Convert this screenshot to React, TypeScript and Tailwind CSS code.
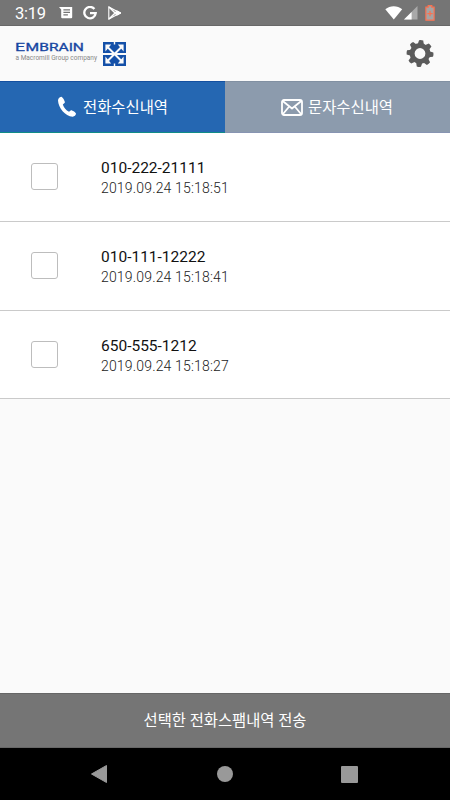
import { useState } from "react";

interface Call {
  number: string;
  date: string;
}

const calls: Call[] = [
  { number: "010-222-21111", date: "2019.09.24 15:18:51" },
  { number: "010-111-12222", date: "2019.09.24 15:18:41" },
  { number: "650-555-1212", date: "2019.09.24 15:18:27" },
];

function StatusBar() {
  return (
    <div className="flex h-[26px] shrink-0 items-center border-b border-[#686868] bg-[#757575] pl-[15px] pr-[15px] text-white">
      <span className="w-[44px] pt-[3px] text-[16.5px] leading-none tracking-[-0.3px]">3:19</span>
      <svg width="14" height="14" viewBox="0 0 14 14" fill="currentColor">
        <path d="M0 1h13.2v10.2a1 1 0 0 1-1 1H3.2a1 1 0 0 1-1-1V3.4z" />
        <path d="M4.4 3.9h6.6M4.4 6.4h6.6M4.4 8.9h4.5" stroke="#757575" strokeWidth="1.1" />
      </svg>
      <svg className="ml-[10px]" width="14" height="14" viewBox="0 0 14 14" fill="none" stroke="currentColor" strokeWidth="2.3">
        <path d="M11.4 3A5.7 5.7 0 1 0 12.7 7.2H7" />
      </svg>
      <svg className="ml-[11px]" width="13" height="14" viewBox="0 0 13 14" fill="none" stroke="currentColor">
        <path d="M.8 1v12L12.2 7z" strokeWidth="1.1" />
        <path d="M1 1l8 7.8L12.5 7 9 5.2 1 13" strokeWidth="1.5" />
        <path d="M8.7 5.2L12.5 7 8.7 8.8 7 7z" fill="currentColor" />
      </svg>
      <svg className="ml-auto" width="18" height="14" viewBox="0 0 18 14" fill="currentColor">
        <path d="M.3 3.2C5.2-.7 12.3-.7 17.2 3.2L8.8 13.4z" />
      </svg>
      <svg className="ml-px" width="14" height="14" viewBox="0 0 14 14" fill="currentColor">
        <path d="M0 13.5L13.5 0v13.5z" opacity=".38" />
        <path d="M0 13.5L7.6 5.9v7.6z" />
      </svg>
      <svg className="ml-[7px]" width="10" height="16" viewBox="0 0 10 16">
        <path d="M3.2.7h3.6v1.5h2.3v13H.9v-13h2.3z" fill="#a4a4a4" stroke="#fb7150" strokeWidth="1.2" />
        <path d="M5 6v5.2M2.4 8.6h5.2" stroke="#fb7150" strokeWidth="1.2" />
      </svg>
    </div>
  );
}

function Logo() {
  return (
    <div className="flex items-center gap-[5px] font-['Roboto',sans-serif]">
      <svg width="83" height="24" viewBox="0 0 83 24" className="overflow-visible">
        <g fill="#1746a2" stroke="#1746a2" strokeWidth=".3">
          <text x="0" y="9.3" fontSize="11.6" textLength="10" lengthAdjust="spacingAndGlyphs">E</text>
          <text x="10.6" y="9.3" fontSize="10.6" textLength="58.4" lengthAdjust="spacingAndGlyphs">MBRAIN</text>
        </g>
        <text x="0.5" y="17.7" fontSize="7" fill="#888" textLength="81.5" lengthAdjust="spacingAndGlyphs">
          a Macromill Group company
        </text>
      </svg>
      <svg width="23" height="24" viewBox="0 0 23 24">
        <path d="M0 0h23v24H0z" fill="#1450a8" />
        <g fill="#fafafa">
          <path d="M2.4 2.6h5.8L2.4 9.4zM20.6 2.6v6.8L14.8 2.6zM2.4 21.4v-6.8l5.8 6.8zM20.6 21.4h-5.8l5.8-6.8z" />
          <path d="M10.8 0h1.4v2.4h-1.4zM10.8 21.6h1.4V24h-1.4zM0 11.1h23v1.8H0z" />
        </g>
        <path d="M4 4.5l15 15M19 4.5l-15 15" stroke="#fafafa" strokeWidth="2" />
      </svg>
    </div>
  );
}

function Header() {
  return (
    <header className="flex h-[55px] shrink-0 items-center justify-between bg-[#fafafa] pr-4 pl-[15px]">
      <Logo />
      <svg width="28" height="28" viewBox="0 0 28 28" fill="none">
        <circle cx="14" cy="13.5" r="7.9" stroke="#5b5b5b" strokeWidth="5" />
        <g fill="#5b5b5b" transform="rotate(5 14 13.5)">
          <path id="tooth" d="M10.9 4.5l1-4.2q2.1-.6 4.2 0l1 4.2z" />
          {[45, 90, 135, 180, 225, 270, 315].map((deg) => (
            <use key={deg} href="#tooth" transform={`rotate(${deg} 14 13.5)`} />
          ))}
        </g>
      </svg>
    </header>
  );
}

function CallRow({ number, date }: Call) {
  const [checked, setChecked] = useState(false);

  return (
    <li className="flex h-[88.8px] items-center border-b-[1.5px] border-[#cacaca] bg-white pl-[31px]">
      <button
        role="checkbox"
        aria-checked={checked}
        aria-label={number}
        onClick={() => setChecked(!checked)}
        className={`h-[27px] w-[27px] rounded-[3px] border-[1.5px] border-[#bdbdbd] ${
          checked ? "bg-[#2567b2]" : "bg-white"
        }`}
      />
      <div className="ml-[43px] flex flex-col pt-[2.6px]">
        <span className="text-[15.5px] leading-5 text-[#111]">{number}</span>
        <span className="text-[14px] leading-5 font-light tracking-[0.17px] text-[#222]">{date}</span>
      </div>
    </li>
  );
}

function App() {
  return (
    <div className="flex h-[800px] w-[450px] flex-col overflow-hidden bg-[#fafafa] font-['Roboto','Noto_Sans_CJK_KR',sans-serif]">
      <StatusBar />
      <Header />

      <nav className="grid h-[52px] shrink-0 grid-cols-2 text-[15.4px] text-white">
        <button className="flex items-center border-t border-b border-t-[#1450a0] border-b-[#108c88] bg-[#2567b2] pl-[57px]">
          <svg width="20" height="22" viewBox="0 0 20 22" fill="currentColor">
            <path d="M4.2.7C2.5.9 1 2.6 1 4.5c.3 7.4 7.2 15.7 14.6 16.2 1.7.1 3.3-1.5 3.4-3.1 0-1-4.2-3.7-5-3.3l-2 1.5C9 14.3 6.9 11.5 5.8 8.4l2-1.6C8.5 6.1 5.8.8 4.2.7z" />
          </svg>
          <span className="ml-[6px] pt-[3px]">전화수신내역</span>
        </button>
        <button className="flex items-center border-t border-b border-t-[#8190a2] border-b-[#8794b2] bg-[#8c9bad] pl-[56px]">
          <svg width="22" height="17" viewBox="0 0 22 17" fill="none" stroke="currentColor" strokeWidth="1.8" strokeLinejoin="round">
            <rect x="1" y="1" width="20" height="15" rx="2" />
            <path d="M2 2.2l9 7.3 9-7.3M2 15l6-7.3M20 15l-6-7.3" />
          </svg>
          <span className="ml-[5px] pt-[3px]">문자수신내역</span>
        </button>
      </nav>

      <ul className="flex-1">
        {calls.map((call) => (
          <CallRow key={call.number} number={call.number} date={call.date} />
        ))}
      </ul>

      <button className="h-[55px] shrink-0 border-t border-b border-[#666] bg-[#757575] pt-[2px] text-[15.35px] text-white">
        선택한 전화스팸내역 전송
      </button>

      <div className="flex h-[52px] shrink-0 items-center justify-between bg-black pr-[92px] pl-[91px]">
        <svg width="16" height="18" viewBox="0 0 16 18">
          <path d="M15.5.5v17L.5 9z" fill="#999" stroke="#999" strokeLinejoin="round" />
        </svg>
        <div className="ml-px h-4 w-4 rounded-full bg-[#999]" />
        <div className="h-[17px] w-[17px] rounded-[1px] bg-[#999]" />
      </div>
    </div>
  );
}

export default App;
